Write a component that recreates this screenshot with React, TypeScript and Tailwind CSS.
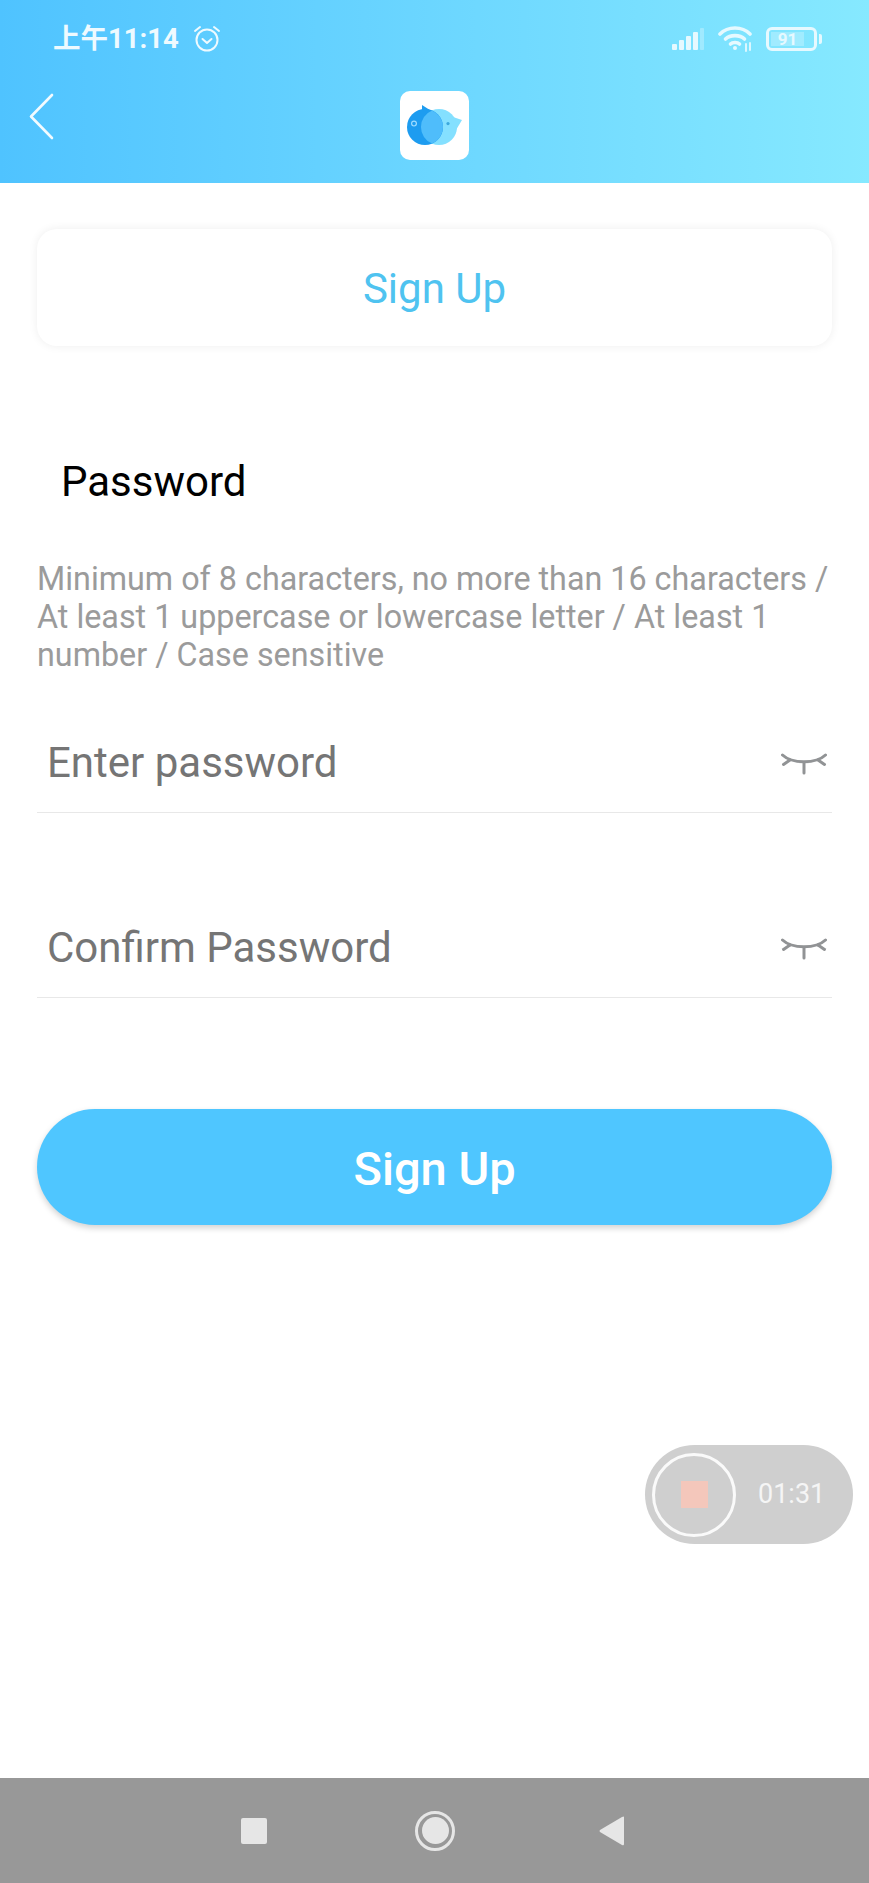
const font = { fontFamily: 'Roboto, "Noto Sans CJK SC", sans-serif' };

function Eye() {
  return (
    <svg className="mt-[4px]" width="46" height="23" viewBox="0 0 46 23" fill="none" stroke="#919395" strokeWidth="3" strokeLinecap="round">
      <path d="M1.5 2 C 11 11, 35 11, 44.5 2" />
      <path d="M9 7 L2.5 11.5" />
      <path d="M37 7 L43.5 11.5" />
      <path d="M23 10 L23 20" />
    </svg>
  );
}

function Field({ label }: { label: string }) {
  return (
    <div className="flex h-[82px] items-center justify-between border-b border-[#e8e8e8] pb-[18px] pl-[10px] pr-[5px]">
      <span className="text-[42px] leading-none text-[#757575]">{label}</span>
      <Eye />
    </div>
  );
}

export default function App() {
  return (
    <div className="relative flex min-h-[1883px] w-[869px] flex-col overflow-hidden bg-white" style={font}>
      <header className="h-[183px] shrink-0 bg-gradient-to-r from-[#4fc3ff] to-[#86e9ff]">
        <div className="flex h-[78px] items-center justify-between pl-[53px] pr-[47px]">
          <div className="flex items-center gap-[14px]">
            <span className="text-[27.5px] font-bold leading-none text-[#eefaff]">上午11:14</span>
            <svg width="28" height="28" viewBox="0 0 28 28" fill="none" stroke="#eefaff" strokeWidth="2" strokeLinecap="round" strokeLinejoin="round">
              <circle cx="14" cy="15" r="10.5" />
              <path d="M9.5 14 L14 18 L18.5 14" />
              <path d="M2 6 L7 2" />
              <path d="M26 6 L21 2" />
            </svg>
          </div>
          <div className="flex items-center gap-[12px]">
            <svg width="34" height="22" viewBox="0 0 34 22" fill="#e6f9ff">
              <rect x="0" y="16" width="5" height="6" rx="1" />
              <rect x="7" y="12" width="5" height="10" rx="1" />
              <rect x="14" y="8" width="5" height="14" rx="1" />
              <rect x="21" y="4" width="5" height="18" rx="1" />
              <rect x="28" y="0" width="4" height="22" rx="1" opacity="0.35" />
            </svg>
            <svg width="36" height="26" viewBox="0 0 36 26" fill="none" stroke="#e6f9ff" strokeWidth="3.6" strokeLinecap="round">
              <path d="M2 8 C 10 0, 24 0, 32 8" />
              <path d="M7.5 13 C 12 8.5, 22 8.5, 26.5 13" />
              <path d="M12.5 18 C 14.5 16, 19.5 16, 21.5 18" />
              <circle cx="17" cy="22" r="2" fill="#e6f9ff" stroke="none" />
              <path d="M28 18 V25 M32 17 V24" strokeWidth="1.8" />
            </svg>
            <div className="flex items-center gap-[2px]">
              <div className="flex h-[24px] w-[51px] items-center rounded-[6px] border-[3px] border-[#e6f9ff] p-[2px]">
                <div className="flex h-full w-[80%] items-center justify-center bg-[#ffffff40] text-[17px] font-bold leading-none text-[#e6f9ff]">91</div>
              </div>
              <div className="h-[10px] w-[3px] rounded-r-[2px] bg-[#e6f9ff]" />
            </div>
          </div>
        </div>
        <div className="relative flex h-[90px] items-start justify-center">
          <svg className="absolute left-[28px] top-[14px]" width="28" height="49" viewBox="0 0 28 49" fill="none" stroke="#f2fbff" strokeWidth="2.6" strokeLinecap="round" strokeLinejoin="round">
            <path d="M24 3 L3 24.5 L24 46" />
          </svg>
          <div className="mt-[13px] flex h-[69px] w-[69px] items-center justify-center rounded-[10px] bg-white">
            <svg width="56" height="41" viewBox="0 0 56 41">
              <path d="M46 12 L55 15 L49 25 Z" fill="#84e0ff" />
              <circle cx="32" cy="22" r="18" fill="#84e0ff" />
              <path d="M15 0 L26 7 L15 6 Z" fill="#1d9cf0" />
              <circle cx="18" cy="22" r="18" fill="#1d9cf0" />
              <path d="M25 5.4 A18 18 0 0 1 25 38.6 A18 18 0 0 1 25 5.4 Z" fill="#4fbdfb" />
              <circle cx="7" cy="18.6" r="2.4" fill="none" stroke="#9fdcff" strokeWidth="1.2" />
              <circle cx="41" cy="18.6" r="1.6" fill="#3aa7dd" />
            </svg>
          </div>
        </div>
      </header>

      <main className="flex flex-1 flex-col px-[37px]">
        <div className="mt-[46px] flex h-[117px] items-center justify-center rounded-[20px] bg-white pt-[2px] shadow-[0_0_10px_rgba(0,0,0,0.07)]">
          <span className="text-[42px] leading-none text-[#4fc3f0]">Sign Up</span>
        </div>

        <h1 className="mt-[115px] pl-[24px] text-[42px] font-normal leading-none text-black">Password</h1>

        <p className="mt-[57px] whitespace-nowrap text-[32.3px] leading-[38px] text-[#9b9b9b]">
          Minimum of 8 characters, no more than 16 characters /
          <br />
          At least 1 uppercase or lowercase letter / At least 1
          <br />
          number / Case sensitive
        </p>

        <div className="mt-[57px]">
          <Field label="Enter password" />
        </div>
        <div className="mt-[103px]">
          <Field label="Confirm Password" />
        </div>

        <button className="mt-[111px] flex h-[116px] items-center justify-center rounded-full bg-[#4fc6ff] pt-[2px] text-[47px] font-medium leading-none text-white shadow-[0_3px_6px_rgba(0,0,0,0.18)]">
          Sign Up
        </button>
      </main>

      <nav className="flex h-[105px] shrink-0 items-center bg-[#989898]">
        <div className="ml-[241px] h-[26px] w-[26px] rounded-[2px] bg-[#e6e6e6]" />
        <div className="ml-[148px] flex h-[40px] w-[40px] items-center justify-center rounded-full border-[3px] border-[#e6e6e6]">
          <div className="h-[27px] w-[27px] rounded-full bg-[#e6e6e6]" />
        </div>
        <svg className="ml-[144px]" width="26" height="30" viewBox="0 0 26 30" fill="#e6e6e6">
          <path d="M25 1 V28 Q25 30 23 29 L1 16 Q0 15 1 14 L23 1 Q25 0 25 1 Z" />
        </svg>
      </nav>

      <div className="absolute left-[645px] top-[1445px] flex h-[99px] w-[208px] items-center rounded-full bg-[#cfcfcf]">
        <div className="ml-[7px] flex h-[84px] w-[84px] items-center justify-center rounded-full border-[3px] border-[#fafafa]">
          <div className="h-[27px] w-[27px] bg-[#f4c7bb]" />
        </div>
        <span className="ml-[22px] text-[27px] leading-none text-[#f5f5f5]">01:31</span>
      </div>
    </div>
  );
}
